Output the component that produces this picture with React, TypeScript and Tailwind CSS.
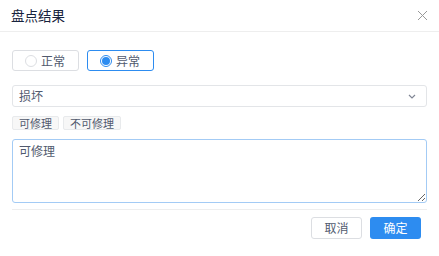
import { useState } from 'react';

const OPTIONS = ['正常', '异常'];
const QUICK_TAGS = ['可修理', '不可修理'];

export default function App() {
  const [result, setResult] = useState('异常');
  const [note, setNote] = useState('可修理');

  return (
    <div
      className="w-[439px] h-[256px] bg-white text-[#515a6e] flex flex-col"
      style={{ fontFamily: '"Noto Sans CJK SC", "Noto Sans", sans-serif' }}
    >
      {/* header */}
      <div className="h-[32px] border-b border-[#eeeeee] flex items-center justify-between pl-[11px] pr-[11px] shrink-0">
        <span className="text-[13.5px] text-[#17233d] leading-none">盘点结果</span>
        <svg width="11" height="11" viewBox="0 0 11 11" className="text-[#999]">
          <path d="M1 1L10 10M10 1L1 10" stroke="currentColor" strokeWidth="1" />
        </svg>
      </div>

      <div className="px-[12px] pt-[18px] flex flex-col">
        {/* radio group */}
        <div className="flex gap-[8px]">
          {OPTIONS.map((o) => {
            const active = result === o;
            return (
              <button
                key={o}
                onClick={() => setResult(o)}
                className={`w-[67px] h-[21px] rounded-[3px] border flex items-center pl-[12px] gap-[4px] text-[12px] leading-none ${
                  active ? 'border-[#2d8cf0]' : 'border-[#dcdee2]'
                }`}
              >
                <span
                  className={`w-[12px] h-[12px] rounded-full border flex items-center justify-center ${
                    active ? 'border-[#2d8cf0]' : 'border-[#dcdee2]'
                  }`}
                >
                  {active && <span className="w-[8px] h-[8px] rounded-full bg-[#2d8cf0]" />}
                </span>
                <span>{o}</span>
              </button>
            );
          })}
        </div>

        {/* select */}
        <div className="mt-[14px] h-[22px] border border-[#e3e5e8] rounded-[3px] flex items-center justify-between pl-[6px] pr-[10px] text-[12px]">
          <span>损坏</span>
          <svg width="8" height="5" viewBox="0 0 8 5" className="text-[#808695]">
            <path d="M1 1L4 4L7 1" stroke="currentColor" strokeWidth="1.2" fill="none" />
          </svg>
        </div>

        {/* quick tags */}
        <div className="mt-[9px] flex gap-[4px]">
          {QUICK_TAGS.map((t) => (
            <button
              key={t}
              onClick={() => setNote(t)}
              className="h-[14px] px-[6px] rounded-[2px] border border-[#e8eaec] bg-[#f7f7f7] text-[11px] leading-none text-[#515a6e]"
            >
              {t}
            </button>
          ))}
        </div>

        {/* note */}
        <textarea
          value={note}
          onChange={(e) => setNote(e.target.value)}
          className="mt-[9px] h-[64px] border border-[#a3cbf5] rounded-[3px] px-[6px] py-[3px] text-[12px] leading-[16px] text-[#515a6e] outline-none"
        />

        {/* footer */}
        <div className="mt-[6px] border-t border-[#eeeeee] pt-[7px] pr-[6px] flex justify-end gap-[8px]">
          <button className="w-[51px] h-[22px] rounded-[3px] border border-[#dcdee2] bg-white text-[12px] text-[#515a6e]">
            取消
          </button>
          <button className="w-[51px] h-[22px] rounded-[3px] bg-[#2d8cf0] text-[12px] text-white">
            确定
          </button>
        </div>
      </div>
    </div>
  );
}
